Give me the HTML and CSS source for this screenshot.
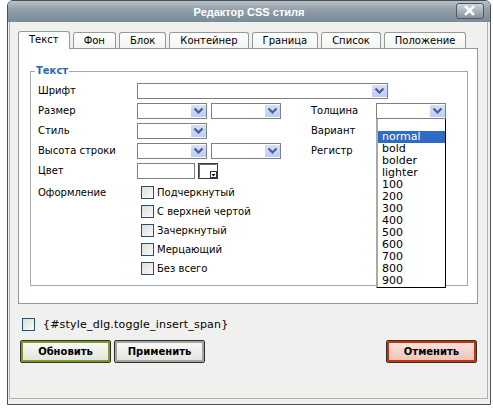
FILE: index.html
```html
<!DOCTYPE html>
<html lang="ru">
<head>
<meta charset="utf-8">
<title>Редактор CSS стиля</title>
<link rel="stylesheet" href="styles.css">
</head>
<body>
<div class="win">
  <div class="title">
    <span class="title-text">Редактор CSS стиля</span>
    <span class="close"><svg width="28" height="16" viewBox="0 0 28 16"><path d="M10 4 L17 11 M17 4 L10 11" stroke="#fff" stroke-width="2.6" stroke-linecap="square"/></svg></span>
  </div>
  <div class="frame">
    <div class="tabs">
      <span class="tab active">Текст</span>
      <span class="tab">Фон</span>
      <span class="tab">Блок</span>
      <span class="tab">Контейнер</span>
      <span class="tab">Граница</span>
      <span class="tab">Список</span>
      <span class="tab">Положение</span>
    </div>
    <div class="panel">
      <fieldset class="fs">
        <legend>Текст</legend>
        <div class="grid">
          <span class="lbl">Шрифт</span>
          <span class="sel wide"><span class="arr"><svg width="15" height="12" viewBox="0 0 15 12"><path d="M3.5 3.5 L7.5 7.5 L11.5 3.5" fill="none" stroke="#4b5f86" stroke-width="2.2"/></svg></span></span>

          <span class="lbl">Размер</span>
          <span class="sel"><span class="arr"><svg width="15" height="12" viewBox="0 0 15 12"><path d="M3.5 3.5 L7.5 7.5 L11.5 3.5" fill="none" stroke="#4b5f86" stroke-width="2.2"/></svg></span></span>
          <span class="sel"><span class="arr"><svg width="15" height="12" viewBox="0 0 15 12"><path d="M3.5 3.5 L7.5 7.5 L11.5 3.5" fill="none" stroke="#4b5f86" stroke-width="2.2"/></svg></span></span>
          <span class="lbl2">Толщина</span>
          <span class="sel"><span class="arr"><svg width="15" height="12" viewBox="0 0 15 12"><path d="M3.5 3.5 L7.5 7.5 L11.5 3.5" fill="none" stroke="#4b5f86" stroke-width="2.2"/></svg></span>
            <ul class="dd">
              <li></li>
              <li class="hl">normal</li>
              <li>bold</li>
              <li>bolder</li>
              <li>lighter</li>
              <li>100</li>
              <li>200</li>
              <li>300</li>
              <li>400</li>
              <li>500</li>
              <li>600</li>
              <li>700</li>
              <li>800</li>
              <li>900</li>
            </ul>
          </span>

          <span class="lbl">Стиль</span>
          <span class="sel"><span class="arr"><svg width="15" height="12" viewBox="0 0 15 12"><path d="M3.5 3.5 L7.5 7.5 L11.5 3.5" fill="none" stroke="#4b5f86" stroke-width="2.2"/></svg></span></span>
          <span class="lbl2 c4">Вариант</span>

          <span class="lbl">Высота строки</span>
          <span class="sel"><span class="arr"><svg width="15" height="12" viewBox="0 0 15 12"><path d="M3.5 3.5 L7.5 7.5 L11.5 3.5" fill="none" stroke="#4b5f86" stroke-width="2.2"/></svg></span></span>
          <span class="sel"><span class="arr"><svg width="15" height="12" viewBox="0 0 15 12"><path d="M3.5 3.5 L7.5 7.5 L11.5 3.5" fill="none" stroke="#4b5f86" stroke-width="2.2"/></svg></span></span>
          <span class="lbl2">Регистр</span>

          <span class="lbl">Цвет</span>
          <span class="color">
            <span class="inp"></span>
            <span class="picker"><svg width="20" height="16" viewBox="0 0 20 16"><rect x="0.5" y="0.5" width="19" height="15" fill="#fff" stroke="#3a3a3a"/><path d="M1.5 14.5 V1.5 H18.5" fill="none" stroke="#6a6a6a"/><rect x="12.5" y="8.5" width="6" height="6" fill="#fff" stroke="#333"/><path d="M13.5 11 H17.5 L15.5 13.5 Z" fill="#000"/></svg></span>
          </span>

          <span class="lbl top">Оформление</span>
          <div class="checks">
            <div class="ck"><span class="cb"></span><span>Подчеркнутый</span></div>
            <div class="ck"><span class="cb"></span><span>С верхней чертой</span></div>
            <div class="ck"><span class="cb"></span><span>Зачеркнутый</span></div>
            <div class="ck"><span class="cb"></span><span>Мерцающий</span></div>
            <div class="ck"><span class="cb"></span><span>Без всего</span></div>
          </div>
        </div>
      </fieldset>
    </div>
    <div class="toggle"><span class="cb"></span><span>{#style_dlg.toggle_insert_span}</span></div>
    <div class="buttons">
      <span class="btn update">Обновить</span>
      <span class="btn apply">Применить</span>
      <span class="btn cancel">Отменить</span>
    </div>
  </div>
</div>
</body>
</html>
```
FILE: styles.css
```css
body {
  margin: 0;
  background: #fff;
  font-family: "DejaVu Sans", Verdana, sans-serif;
  font-size: 10px;
  color: #000;
}
.win {
  margin-left: 7px;
  width: 484px;
  height: 405px;
  box-sizing: border-box;
  border: 1px solid #4a4f54;
  border-radius: 6px 6px 0 0;
  background: #f0f0ee;
  display: flex;
  flex-direction: column;
  overflow: hidden;
}
.title {
  height: 21px;
  flex: none;
  position: relative;
  display: flex;
  align-items: center;
  justify-content: center;
  padding-top: 1px;
  box-sizing: border-box;
  background: linear-gradient(#b6c0c8, #93a1ac 40%, #8393a0 70%, #7b8b98);
  color: #fff;
  font: bold 11px "Liberation Sans", Arial, sans-serif;
}
.close {
  position: absolute;
  right: 6px;
  top: 2px;
  width: 28px;
  height: 16px;
  box-sizing: border-box;
  border: 1px solid #4e5963;
  border-radius: 3px;
  background: linear-gradient(#d0d6da, #a7b2ba 50%, #86939d);
  display: flex;
  align-items: center;
  justify-content: center;
}
.close svg { display: block; margin: -1px; }
.frame {
  flex: 1;
  margin: 0 2px 5px 1px;
  border: 1px solid #b8b0a8;
  border-top: none;
  padding: 9px 9px 0 8px;
  display: flex;
  flex-direction: column;
}
.tabs {
  display: flex;
  gap: 3px;
  height: 17px;
  align-items: flex-end;
}
.tab {
  height: 16px;
  box-sizing: border-box;
  padding: 0 10px;
  border: 1px solid #919b9c;
  border-bottom: none;
  border-radius: 3px 3px 0 0;
  background: linear-gradient(#ffffff, #f3f3f0);
  line-height: 15px;
  white-space: nowrap;
}
.tab.active {
  height: 18px;
  margin-bottom: -1px;
  background: #fff;
  position: relative;
  z-index: 1;
  line-height: 16px;
}
.panel {
  height: 256px;
  flex: none;
  box-sizing: border-box;
  border: 1px solid #919b9c;
  background: #fff;
  padding: 16px 9px 0 11px;
}
.fs {
  margin: 0;
  padding: 6px 7px 7px 7px;
  border: 1px solid #a3a8aa;
  min-width: 0;
}
.fs legend {
  padding: 0 1px;
  margin-left: -3px;
  color: #2a68b0;
  font-weight: bold;
  font-size: 10px;
  line-height: 12px;
}
.grid {
  display: grid;
  grid-template-columns: 99px 74px 100px 65px 71px;
  row-gap: 4px;
}
.lbl {
  grid-column: 1;
  line-height: 16px;
  white-space: nowrap;
}
.lbl.top {
  line-height: 19px;
  align-self: start;
}
.lbl2 {
  line-height: 16px;
  white-space: nowrap;
}
.c4 { grid-column: 4; }
.sel {
  width: 70px;
  height: 16px;
  box-sizing: border-box;
  border: 1px solid #7f7f7f;
  background: #fff;
  display: flex;
  justify-content: flex-end;
  align-items: flex-start;
  padding-top: 1px;
  position: relative;
}
.sel.wide {
  width: 251px;
  grid-column: 2 / span 4;
}
.arr {
  width: 15px;
  height: 12px;
  background: linear-gradient(#d3dffc, #bccdf6);
}
.arr svg { display: block; }
.dd {
  position: absolute;
  left: -1px;
  top: 15px;
  width: 70px;
  box-sizing: border-box;
  margin: 0;
  padding: 0;
  list-style: none;
  border-left: 2px solid #a9a9a9;
  border-right: 1px solid #000;
  border-bottom: 1px solid #000;
  background: #fff;
  font-size: 11px;
  line-height: 12px;
  z-index: 2;
}
.dd li {
  height: 12px;
  padding-left: 4px;
}
.dd li.hl {
  background: #316ac5;
  color: #fff;
}
.color {
  grid-column: 2 / span 2;
  display: flex;
  gap: 3px;
}
.inp {
  width: 58px;
  height: 16px;
  box-sizing: border-box;
  border: 1px solid #7f7f7f;
  background: #fff;
}
.picker svg { display: block; }
.checks {
  grid-column: 2 / span 4;
  display: flex;
  flex-direction: column;
  padding-left: 4px;
}
.ck {
  height: 19px;
  display: flex;
  align-items: center;
  gap: 3px;
  white-space: nowrap;
}
.cb {
  width: 13px;
  height: 13px;
  flex: none;
  box-sizing: border-box;
  border: 1px solid #1c5180;
  background: linear-gradient(135deg, #dcdcd7, #fbfbf9);
}
.toggle {
  margin-top: 14px;
  height: 13px;
  display: flex;
  align-items: center;
  gap: 8px;
  padding-left: 4px;
  font-size: 11px;
  letter-spacing: 0.2px;
  white-space: nowrap;
}
.buttons {
  margin-top: 9px;
  display: flex;
  gap: 3px;
  padding: 0 1px 0 2px;
}
.btn {
  width: 91px;
  height: 23px;
  box-sizing: border-box;
  border: 1px solid #303030;
  border-radius: 2px;
  font-weight: bold;
  font-size: 10px;
  display: flex;
  align-items: center;
  justify-content: center;
}
.update {
  box-shadow: inset 0 0 0 2px #7f9a2a;
  background: linear-gradient(#fbfbf9, #ecece8 60%, #e2e2dc);
}
.apply {
  box-shadow: inset 0 0 0 2px #a4a4a4;
  background: linear-gradient(#fbfbf9, #ecece8 60%, #e2e2dc);
}
.cancel {
  margin-left: auto;
  box-shadow: inset 0 0 0 2px #c8330e;
  background: linear-gradient(#fbe6e1, #f3cfc7 60%, #ecc0b6);
}
```
